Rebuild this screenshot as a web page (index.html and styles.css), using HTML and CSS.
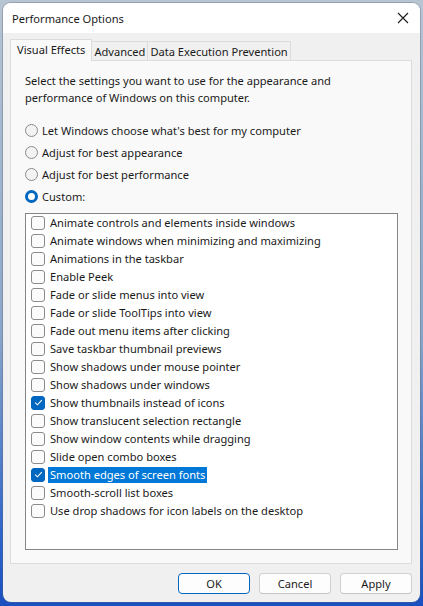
FILE: index.html
```html
<!DOCTYPE html>
<html>
<head>
<meta charset="utf-8">
<link rel="stylesheet" href="styles.css">
</head>
<body>
<div class="window">
  <div class="titlebar">
    <span class="title">Performance Options</span>
    <svg class="close" width="12" height="12" viewBox="0 0 12 12"><path d="M1 1 L11 11 M11 1 L1 11" stroke="#1a1a1a" stroke-width="1.1" fill="none"/></svg>
  </div>
  <div class="content">
    <div class="tabs">
      <div class="tab active">Visual Effects</div>
      <div class="tab">Advanced</div>
      <div class="tab">Data Execution Prevention</div>
    </div>
    <div class="panel">
      <p class="intro">Select the settings you want to use for the appearance and performance of Windows on this computer.</p>
      <div class="radios">
        <div class="radio-row"><span class="radio"></span>Let Windows choose what's best for my computer</div>
        <div class="radio-row"><span class="radio"></span>Adjust for best appearance</div>
        <div class="radio-row"><span class="radio"></span>Adjust for best performance</div>
        <div class="radio-row"><span class="radio on"></span>Custom:</div>
      </div>
      <div class="list">
        <div class="item"><span class="cb"></span><span class="lbl">Animate controls and elements inside windows</span></div>
        <div class="item"><span class="cb"></span><span class="lbl">Animate windows when minimizing and maximizing</span></div>
        <div class="item"><span class="cb"></span><span class="lbl">Animations in the taskbar</span></div>
        <div class="item"><span class="cb"></span><span class="lbl">Enable Peek</span></div>
        <div class="item"><span class="cb"></span><span class="lbl">Fade or slide menus into view</span></div>
        <div class="item"><span class="cb"></span><span class="lbl">Fade or slide ToolTips into view</span></div>
        <div class="item"><span class="cb"></span><span class="lbl">Fade out menu items after clicking</span></div>
        <div class="item"><span class="cb"></span><span class="lbl">Save taskbar thumbnail previews</span></div>
        <div class="item"><span class="cb"></span><span class="lbl">Show shadows under mouse pointer</span></div>
        <div class="item"><span class="cb"></span><span class="lbl">Show shadows under windows</span></div>
        <div class="item"><span class="cb checked"><svg width="9" height="9" viewBox="0 0 9 9"><path d="M1.2 4.6 L3.5 6.8 L7.8 2.2" stroke="#fff" stroke-width="1.1" fill="none"/></svg></span><span class="lbl">Show thumbnails instead of icons</span></div>
        <div class="item"><span class="cb"></span><span class="lbl">Show translucent selection rectangle</span></div>
        <div class="item"><span class="cb"></span><span class="lbl">Show window contents while dragging</span></div>
        <div class="item"><span class="cb"></span><span class="lbl">Slide open combo boxes</span></div>
        <div class="item"><span class="cb checked"><svg width="9" height="9" viewBox="0 0 9 9"><path d="M1.2 4.6 L3.5 6.8 L7.8 2.2" stroke="#fff" stroke-width="1.1" fill="none"/></svg></span><span class="lbl selected">Smooth edges of screen fonts</span></div>
        <div class="item"><span class="cb"></span><span class="lbl">Smooth-scroll list boxes</span></div>
        <div class="item"><span class="cb"></span><span class="lbl">Use drop shadows for icon labels on the desktop</span></div>
      </div>
    </div>
    <div class="buttons">
      <button class="btn default">OK</button>
      <button class="btn">Cancel</button>
      <button class="btn">Apply</button>
    </div>
  </div>
</div>
</body>
</html>
```
FILE: styles.css
```css
html, body {
  margin: 0;
  padding: 0;
}
body {
  width: 423px;
  height: 606px;
  overflow: hidden;
  background: linear-gradient(180deg, #b7c4d2 0%, #8aa6c8 55%, #2a62c9 90%, #1a4fc0 100%);
  font-family: "Noto Sans", "Open Sans", sans-serif;
  font-size: 11.1px;
  color: #1a1a1a;
}
.window {
  margin: 3px 0 0 3px;
  width: 417px;
  height: 599px;
  border-radius: 8px;
  background: #f0f0f0;
  overflow: hidden;
  box-shadow: 0 0 0 1px rgba(90, 100, 120, 0.35);
  display: flex;
  flex-direction: column;
}
.titlebar {
  height: 30px;
  flex: none;
  background: #ffffff;
  display: flex;
  align-items: center;
  justify-content: space-between;
  padding: 0 11px 0 9px;
}
.title {
  font-size: 11.1px;
  color: #1a1a1a;
}
.close {
  display: block;
}
.content {
  padding: 7px 8px 0 7px;
  display: flex;
  flex-direction: column;
}
.tabs {
  display: flex;
  align-items: flex-end;
  height: 20px;
  position: relative;
  z-index: 1;
}
.tab {
  height: 18px;
  line-height: 19px;
  padding: 0 2px;
  background: #f0f0f0;
  border: 1px solid #dcdcdc;
  border-bottom: none;
  border-left: none;
  white-space: nowrap;
}
.tab.active {
  height: 21px;
  line-height: 19px;
  padding: 0 6px;
  background: #f9f9f9;
  border-left: 1px solid #dcdcdc;
  margin-bottom: -1px;
}
.panel {
  height: 504px;
  box-sizing: border-box;
  border: 1px solid #dcdcdc;
  background: #f9f9f9;
  padding: 11px 12px 0 14px;
}
.intro {
  margin: 0;
  line-height: 17px;
  width: 320px;
}
.radios {
  margin-top: 16px;
  display: flex;
  flex-direction: column;
  gap: 6.3px;
}
.radio-row {
  display: flex;
  align-items: center;
  height: 16px;
}
.radio {
  width: 11px;
  height: 11px;
  border: 1px solid #8b8b8b;
  border-radius: 50%;
  background: #f3f3f3;
  margin-right: 4px;
  flex: none;
}
.radio.on {
  width: 7px;
  height: 7px;
  border: 3px solid #0067c0;
  background: #ffffff;
}
.list {
  margin-top: 8px;
  width: 373px;
  height: 337px;
  box-sizing: border-box;
  border: 1px solid #858585;
  background: #ffffff;
  padding-top: 0;
}
.item {
  height: 18px;
  display: flex;
  align-items: center;
  padding-left: 5px;
}
.cb {
  width: 12px;
  height: 12px;
  border: 1px solid #8b8b8b;
  border-radius: 3px;
  background: #fbfbfb;
  flex: none;
  margin-right: 3px;
  display: flex;
  align-items: center;
  justify-content: center;
  box-sizing: content-box;
}
.cb.checked {
  background: #0067c0;
  border-color: #0067c0;
}
.cb svg {
  display: block;
}
.lbl {
  padding: 0 2px;
  line-height: 16px;
  white-space: nowrap;
}
.lbl.selected {
  background: #0078d7;
  color: #ffffff;
}
.buttons {
  display: flex;
  justify-content: flex-end;
  gap: 9px;
  margin-top: 9px;
}
.btn {
  width: 72px;
  height: 21px;
  box-sizing: border-box;
  border: 1px solid #d0d0d0;
  border-bottom-color: #c4c4c4;
  border-radius: 4px;
  background: #fdfdfd;
  font-family: "Noto Sans", "Open Sans", sans-serif;
  font-size: 11.1px;
  color: #1a1a1a;
  padding: 0;
  line-height: 18px;
}
.btn.default {
  border: 1px solid #0067c0;
}
```
